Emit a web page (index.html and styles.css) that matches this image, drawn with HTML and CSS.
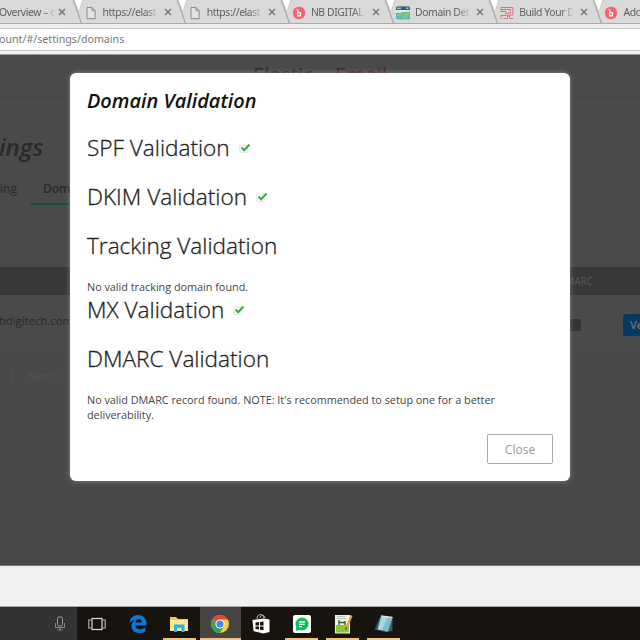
FILE: index.html
```html
<!DOCTYPE html>
<html lang="en">
<head>
<meta charset="utf-8">
<title>Domain Validation</title>
<link rel="stylesheet" href="styles.css">
</head>
<body>
<svg class="defs" width="0" height="0">
  <symbol id="edge" viewBox="0 0 14 24"><path d="M3 0H12L8.4 11.5Z" fill="#fff"/><path d="M2.5 0L10.5 23.5" stroke="#aaa" stroke-width="1.3" fill="none"/><path d="M12 0L8.2 11" stroke="#c8c8c8" fill="none"/></symbol>
  <symbol id="x" viewBox="0 0 8 8"><path d="M1 1L7 7M7 1L1 7" stroke="#777" stroke-width="1.5"/></symbol>
  <symbol id="doc" viewBox="0 0 14 14"><path d="M3 1.5H8L11.2 4.7V12.7H3ZM8 1.5V4.7H11.2" fill="#e4e4e4" stroke="#8b8b8b" stroke-width="1"/></symbol>
  <symbol id="nb" viewBox="0 0 14 14"><circle cx="7" cy="7" r="6.2" fill="#f5616d"/><path d="M5.6 3V9.8H8.4V6.4H5.6" fill="none" stroke="#fff" stroke-width="1.3"/></symbol>
  <symbol id="check" viewBox="0 0 12 12"><rect x=".8" y="3" width="7.6" height="7.6" rx="1" fill="#fafafa" stroke="#e2e2e2"/><path d="M2.5 5.5L5.2 8.2L10.5 2.5" fill="none" stroke="#37ad49" stroke-width="2"/></symbol>
</svg>
<div class="screen">
  <header class="tabs">
    <div class="tab first"><span class="name">Overview – <i>c</i></span><svg class="x"><use href="#x"/></svg></div>
    <div class="tab"><svg class="edge"><use href="#edge"/></svg><svg class="fav"><use href="#doc"/></svg><span class="name">https://elasti</span><svg class="x"><use href="#x"/></svg></div>
    <div class="tab"><svg class="edge"><use href="#edge"/></svg><svg class="fav"><use href="#doc"/></svg><span class="name">https://elasti</span><svg class="x"><use href="#x"/></svg></div>
    <div class="tab"><svg class="edge"><use href="#edge"/></svg><svg class="fav"><use href="#nb"/></svg><span class="name">NB DIGITAL</span><svg class="x"><use href="#x"/></svg></div>
    <div class="tab"><svg class="edge"><use href="#edge"/></svg>
      <svg class="fav" viewBox="0 0 14 14"><rect y=".5" width="14" height="13" rx="1.5" fill="#57b5d9"/><path d="M0 2Q0 .5 1.5 .5H12.5Q14 .5 14 2V4H0Z" fill="#47555d"/><path d="M1 2.2H5M10 2.2H12.5" stroke="#e5eef0"/><path d="M0 4H14V5.5L0 7Z" fill="#d8eef6"/><path d="M0 10Q3 6 7 8L4 11ZM8 8L13 6V9L10 12.5L6 12Z" fill="#8acb50"/></svg>
      <span class="name">Domain Det</span><svg class="x"><use href="#x"/></svg></div>
    <div class="tab"><svg class="edge"><use href="#edge"/></svg>
      <svg class="fav" viewBox="0 0 14 14"><path d="M1 12.5V9.5H6V5.5H1V1.5H12.8V9H9.5V12.5H13M1 3.5H10.5V7H8V10.7M3.5 12.5H7.5V9" fill="none" stroke="#e36e78" stroke-width="1"/></svg>
      <span class="name">Build Your D</span><svg class="x"><use href="#x"/></svg></div>
    <div class="tab"><svg class="edge"><use href="#edge"/></svg><svg class="fav"><use href="#nb"/></svg><span class="name">Add N</span></div>
  </header>
  <div class="toolbar"><div class="address">ount/#/settings/domains</div></div>

  <main class="page">
    <div class="brand"><span>Elastic</span><span class="red">Email</span></div>
    <h1 class="title">ings</h1>
    <nav class="nav"><span class="nav-item">ing</span><span class="nav-item active">Dom</span></nav>
    <div class="thead"><span>DMARC</span></div>
    <div class="row"><span class="domain">nbdigitech.com</span><span class="pill"></span><span class="verify">Ve</span></div>
    <div class="pager"><span>1</span><span>Next &gt;</span></div>

    <section class="modal">
      <h2>Domain Validation</h2>
      <h3>SPF Validation<svg class="check"><use href="#check"/></svg></h3>
      <h3>DKIM Validation<svg class="check"><use href="#check"/></svg></h3>
      <h3>Tracking Validation</h3>
      <p>No valid tracking domain found.</p>
      <h3 class="tight">MX Validation<svg class="check"><use href="#check"/></svg></h3>
      <h3>DMARC Validation</h3>
      <p>No valid DMARC record found. NOTE: It's recommended to setup one for a better deliverability.</p>
      <div class="actions"><button class="close">Close</button></div>
    </section>
  </main>

  <div class="strip"></div>
  <footer class="taskbar">
    <div class="search"><svg width="12" height="16" viewBox="0 0 12 16"><rect x="3.5" y="1" width="5" height="9" rx="1.5" fill="none" stroke="#999"/><path d="M1.5 7V11.5H10.5V7M6 11.5V14M3.5 14H8.5" fill="none" stroke="#888"/></svg></div>
    <div class="app"><svg viewBox="0 0 20 20"><rect x="5" y="4.5" width="10" height="11" fill="none" stroke="#ddd" stroke-width="1.2"/><path d="M4 6H1.8V14H4M16 6H18.2V14H16" fill="none" stroke="#bbb" stroke-width="1.1"/></svg></div>
    <div class="app"><svg viewBox="0 0 20 20"><path d="M1.5 9C2 3.8 5.5 1 10 1C15.5 1 18.5 5 18.5 9.5V11.5H7.3C7.5 14 9.5 15.2 12 15.2C14 15.2 16 14.6 17.3 13.8V17.4C15.5 18.5 13.5 19 11.3 19C6.5 19 3.5 16.2 3.5 12C3.5 9.2 5 7.2 7 6C4.8 6.2 3 7.2 1.5 9ZM7.4 8.6H13.8C13.8 6.3 12.7 5.2 10.8 5.2C8.9 5.2 7.8 6.5 7.4 8.6Z" fill="#0a78d7"/></svg></div>
    <div class="app open"><svg viewBox="0 0 20 20"><path d="M1 3H7L9 5H19V17H1Z" fill="#f4c84f"/><path d="M1 6H19V17H1Z" fill="#ffe58b"/><path d="M5 18V10.5H15.5V18H12.5V14H8V18Z" fill="#25b5ea"/></svg></div>
    <div class="app open current"><svg viewBox="0 0 20 20"><circle cx="10" cy="10" r="9" fill="#fccb3d"/><path d="M10 10L2.2 5.5A9 9 0 0 1 17.8 5.5H10Z" fill="#e6463a"/><path d="M2.2 5.5A9 9 0 0 0 10 19L14 12L10 10Z" fill="#37a255"/><circle cx="10" cy="10" r="4.6" fill="#fff"/><circle cx="10" cy="10" r="3.6" fill="#4688ee"/></svg></div>
    <div class="app"><svg viewBox="0 0 20 20"><path d="M6 5C6 -.5 12 -1 13 4M9 4C9.5 1 13 0 14 4" fill="none" stroke="#bbb"/><path d="M1.5 6L13 4.5L18.5 5.5V18L12.5 19.5L2.5 17Z" fill="#fff"/><path d="M4.5 8.5L8 8V11.5H4.5ZM9 8L12.5 7.5V11.5H9ZM4.5 12.5H8V15.6L4.5 15ZM9 12.5H12.5V16.3L9 15.8Z" fill="#17130f"/></svg></div>
    <div class="app open"><svg viewBox="0 0 20 20"><rect x="1" y="1" width="18" height="18" rx="2" fill="#fff"/><circle cx="10" cy="10" r="6.5" fill="#0ac156"/><path d="M4 12L4.2 17L8 15.5Z" fill="#0ac156"/><path d="M7 8H13M7 10.4H12.5M7 12.6H10" stroke="#fff" stroke-width="1.4"/></svg></div>
    <div class="app open"><svg viewBox="0 0 20 20"><path d="M2 1H17V19.5H2Z" fill="#eef5df"/><path d="M3 11H16V18.5H3Z" fill="#8bc63c"/><path d="M4 4.5H13M4 2.5H12" stroke="#bbb"/><path d="M6 6V11M6 8.5H12M12 7V11" stroke="#3e5425" stroke-width="1.3"/><path d="M18.5 1.5L13.5 14" stroke="#e5a12d" stroke-width="2.2"/><path d="M13.4 13.5L12.7 15.7" stroke="#553b1b" stroke-width="1.2"/></svg></div>
    <div class="app open"><svg viewBox="0 0 20 20"><path d="M6 3L.5 15.5L12 18L18.5 17V4Z" fill="#3b5b67"/><path d="M7 2L18.5 3.5L14 17.8L3.5 15.5Z" fill="#7dbdce"/><path d="M8 2.5L13.5 3L8 16L4 15.2Z" fill="#a9d8e2"/><path d="M7 2L18.5 3.5" stroke="#ddd" stroke-width="1.3"/></svg></div>
  </footer>
</div>
</body>
</html>
```
FILE: styles.css
```css
* { box-sizing: border-box; }
body { margin: 0; font-family: "Open Sans", sans-serif; }
.defs { position: absolute; }
.screen { width: 640px; height: 640px; overflow: hidden; display: flex; flex-direction: column; background: #4a4a4a; }

.tabs { height: 24px; flex: none; display: flex; overflow: hidden; background: #d9d9d9; border-bottom: 1px solid #aaa; }
.tab { width: 104.2px; flex: none; display: flex; align-items: center; padding-top: 1px; }
.tab.first { width: 70.5px; }
.edge { width: 14px; height: 24px; margin-top: -1px; flex: none; }
.fav { width: 14px; height: 14px; margin: 1px 5px 0 -1px; flex: none; }
.name { width: 54px; flex: none; overflow: hidden; white-space: nowrap; font: 10.4px/16px "Noto Sans", sans-serif; letter-spacing: -.42px; color: #606060; -webkit-mask-image: linear-gradient(90deg, #000 78%, rgba(0,0,0,.15)); mask-image: linear-gradient(90deg, #000 78%, rgba(0,0,0,.15)); }
.name i { font-style: normal; }
.first .name { margin-left: -1px; width: 55px; }
.x { width: 8px; height: 8px; margin-left: 7px; flex: none; }
.first .x { margin-left: 4px; }

.toolbar { height: 31px; flex: none; padding: 4px 0; background: #efefef; border-bottom: 1px solid #999; }
.address { height: 23px; background: #fff; border: solid #c6c6c6; border-width: 1px 0; font: 10.65px/21px "Noto Sans", sans-serif; color: #777; margin-left: -1px; }

.page { position: relative; height: 511px; flex: none; background: #4a4a4a; color: #292929; border-bottom: 1px solid #777; overflow: hidden; }
.brand { height: 43px; border-bottom: 1px solid #444; display: flex; justify-content: center; gap: 22px; padding-top: 5px; font-size: 20.5px; line-height: 28px; }
.red { color: #4f2022; }
.title { margin: 33px 0 0 -1px; height: 32px; font: italic 600 24px/32px "Open Sans", sans-serif; }
.nav { display: flex; margin-top: 15px; height: 27px; font-size: 12px; line-height: 22px; }
.nav-item { width: 31px; }
.nav-item.active { width: 80px; padding-left: 12px; font-weight: 600; border-bottom: 2px solid #124e36; }
.thead { margin-top: 62px; height: 28px; background: #383838; display: flex; justify-content: flex-end; padding-right: 47px; font-size: 10px; line-height: 28px; color: #5a5a5a; }
.row { height: 58px; display: flex; align-items: center; }
.domain { width: 80px; flex: none; margin-left: -8px; font-size: 11.3px; margin-top: -7px; }
.pill { width: 30px; height: 12px; flex: none; margin-left: 479px; margin-top: 2px; background: #343434; border-radius: 2px; }
.verify { width: 60px; height: 22px; flex: none; margin: 1px 0 0 42px; padding-left: 7px; font: 600 11px/22px "Open Sans", sans-serif; color: #707070; background: #063960; border-radius: 2px; }
.pager { height: 213px; border-top: 1px solid #454545; background: #494949; display: flex; gap: 14px; padding: 15px 0 0 8px; font-size: 10px; color: #565656; }

.modal { position: absolute; left: 70px; top: 18px; width: 500px; height: 408px; padding: 14px 17px 17px; background: #fff; border-radius: 6px; box-shadow: 0 0 5px rgba(255,255,255,.35); color: #222; display: flex; flex-direction: column; }
.modal h2 { margin: 0; font: italic 600 19.9px/27px "Open Sans", sans-serif; color: #111; }
.modal h3 { margin: 19px 0 0; font: 300 22.6px/30px "Open Sans", sans-serif; -webkit-text-stroke: .3px #222; display: flex; align-items: center; }
.modal h3.tight { margin-top: 1px; }
.modal p { margin: 18px 0 0; font-size: 10.82px; line-height: 15px; color: #444; }
.check { width: 12px; height: 12px; margin-left: 9px; }
.actions { margin-top: auto; display: flex; justify-content: flex-end; }
.close { width: 66px; height: 30px; padding: 0; background: #fff; border: 1px solid #aaa; border-radius: 2px; font: 12px "Open Sans", sans-serif; color: #999; }

.strip { height: 41px; flex: none; background: #f1f1f1; border-bottom: 1px solid #aaa; }
.taskbar { height: 33px; flex: none; display: flex; background: #17130f; }
.search { width: 77px; background: #333; display: flex; justify-content: flex-end; align-items: center; padding-right: 11px; }
.app { width: 40.9px; flex: none; display: flex; justify-content: center; align-items: center; position: relative; }
.app svg { width: 20px; height: 20px; }
.app.open::after { content: ""; position: absolute; left: 4px; right: 4px; bottom: 0; height: 2px; background: #f0c47b; }
.app.current { background: #474542; }
.app.current::after { left: 0; right: 0; }
```
